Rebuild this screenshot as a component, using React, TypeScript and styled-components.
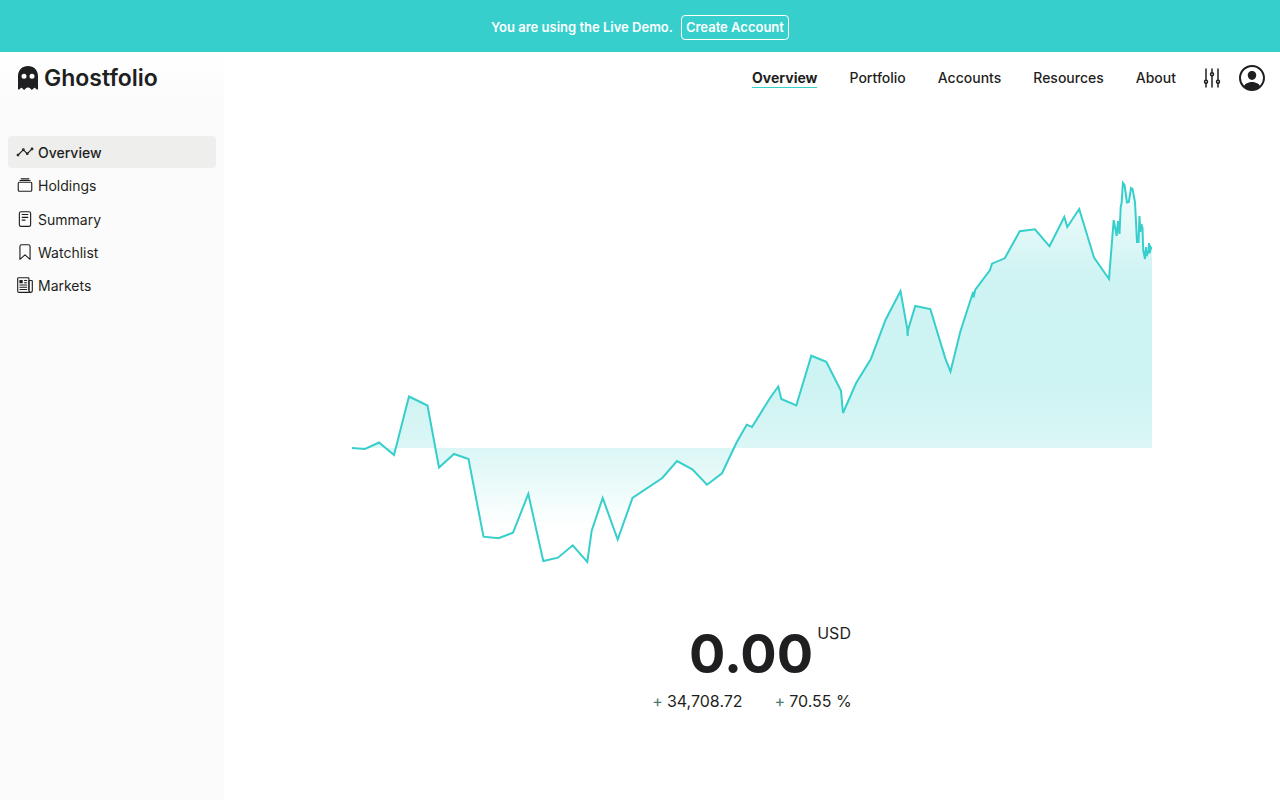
import React from 'react';
import styled, { createGlobalStyle } from 'styled-components';
import {
  IoAlbumsOutline,
  IoAnalyticsOutline,
  IoBookmarkOutline,
  IoNewspaperOutline,
  IoOptionsOutline,
  IoPersonCircleOutline,
  IoReaderOutline,
} from 'react-icons/io5';

const teal = '#36cfcc';
const ink = '#1f1f21';

const GlobalStyle = createGlobalStyle`
  *, *::before, *::after { box-sizing: border-box; }
  body {
    margin: 0;
    background: #fff;
    color: ${ink};
    font: 400 14px/20px Inter, Roboto, sans-serif;
  }
`;

const Page = styled.div`
  min-height: 100vh;
  display: flex;
  flex-direction: column;
`;

const Banner = styled.div`
  height: 52px;
  flex: none;
  display: flex;
  align-items: center;
  justify-content: center;
  gap: 8px;
  padding-top: 2px;
  background: ${teal};
  color: #fff;
  font-size: 13px;
  font-weight: 600;
`;

const BannerButton = styled.button`
  height: 25px;
  padding: 0 4px;
  border: 1px solid #fff;
  border-radius: 4px;
  background: transparent;
  color: inherit;
  font: inherit;
  cursor: pointer;
`;

const Body = styled.div`
  flex: 1;
  display: grid;
  grid-template-columns: 224px minmax(0, 1fr);
  grid-template-rows: 52px 1fr;
  background: linear-gradient(#fbfbfb, #fbfbfb) left / 224px 100% no-repeat;
`;

const Header = styled.header`
  grid-column: 1 / -1;
  display: flex;
  align-items: center;
  justify-content: space-between;
  padding: 0 12px 0 18px;
  background: linear-gradient(#fff, rgba(255, 255, 255, 0));
`;

const Logo = styled.a`
  display: flex;
  align-items: center;
  gap: 6px;
  color: ${ink};
  font-size: 23px;
  font-weight: 600;
  line-height: 32px;
  text-decoration: none;
`;

const HeaderEnd = styled.div`
  display: flex;
  align-items: center;
  gap: 12px;
`;

const Nav = styled.nav`
  display: flex;
  gap: 32px;
  margin-right: 12px;
`;

const NavLink = styled.a<{ $active?: boolean }>`
  height: 20px;
  color: ${ink};
  font-weight: ${(p) => (p.$active ? 700 : 500)};
  text-decoration: none;
  box-shadow: ${(p) => (p.$active ? `inset 0 -1px 0 ${teal}` : 'none')};
`;

const IconButton = styled.button<{ $rotate?: boolean }>`
  display: flex;
  padding: 0;
  border: 0;
  background: none;
  color: ${ink};
  cursor: pointer;
  svg { transform: ${(p) => (p.$rotate ? 'rotate(90deg)' : 'none')}; }
`;

const Sidebar = styled.nav`
  padding: 32px 8px;
`;

const SideList = styled.ul`
  display: flex;
  flex-direction: column;
  justify-content: space-between;
  min-height: 165px;
  margin: 0;
  padding: 0;
  list-style: none;
`;

const SideLink = styled.a<{ $active?: boolean }>`
  display: flex;
  align-items: center;
  gap: 4px;
  height: 32px;
  padding: 2px 8px 0;
  border-radius: 4px;
  background: ${(p) => (p.$active ? '#eeeeed' : 'transparent')};
  color: ${ink};
  font-weight: ${(p) => (p.$active ? 500 : 400)};
  text-decoration: none;
  svg { flex: none; margin-bottom: 2px; }
`;

const Main = styled.main`
  display: flex;
  flex-direction: column;
  align-items: center;
  padding: 44px 16px 24px;
`;

const Chart = styled.svg`
  display: block;
  width: 100%;
  max-width: 800px;
  height: auto;
`;

const Summary = styled.section`
  display: flex;
  flex-direction: column;
  align-items: center;
  margin-top: 23px;
`;

const Total = styled.div`
  display: flex;
  align-items: flex-start;
  gap: 4px;
  padding-left: 36px;
`;

const TotalValue = styled.span`
  font-size: 54px;
  line-height: 66px;
  font-weight: 700;
`;

const Currency = styled.span`
  font-size: 16px;
  line-height: 24px;
`;

const Changes = styled.div`
  display: flex;
  gap: 32px;
  margin-top: 2px;
  font-size: 16px;
  line-height: 24px;
`;

const Change = styled.span`
  display: flex;
  gap: 4px;
`;

const Sign = styled.span`
  color: #4d7a70;
`;

const points: [number, number][] = [
  [0, 300], [13, 301], [27, 294.5], [42, 307], [57, 248.5], [75.5, 257.5],
  [87, 319.5], [102, 306], [116.5, 311], [131.5, 388.7], [146.5, 390.3],
  [161, 384.7], [176.3, 346], [191.3, 413], [206, 409.7], [220.7, 397.3],
  [235.3, 414], [239.7, 382.7], [250.7, 350], [265.7, 391.5], [280.5, 350],
  [310.3, 330], [325, 313], [340.3, 321.3], [355, 336.7], [370, 325.3],
  [384.7, 294.3], [394.7, 276.7], [400, 279], [418.7, 249], [426.3, 238.5],
  [429.3, 251], [444.3, 257.5], [459.3, 207.7], [474.3, 213.7], [489, 242.7],
  [491, 265], [504, 235.3], [519, 210.7], [533.5, 172], [548.5, 143],
  [555.3, 181], [555.6, 188], [556, 182], [563.3, 158], [578.3, 161], [593.3, 210.3],
  [598.5, 223.5], [608.5, 183], [621.2, 143.7], [621.5, 149.5], [623.3, 141.7],
  [638, 122], [640, 115.7], [652.7, 110.3], [667.7, 83.3], [683, 81.3],
  [697.5, 98.3], [712.3, 69], [715.3, 79], [727.2, 61], [742, 109.5],
  [757, 131], [761.7, 72], [764.7, 88], [766, 73], [767.5, 86], [768.7, 59],
  [769.7, 54], [770.9, 35], [772.5, 37], [775, 54.5], [776.8, 54],
  [779, 40], [780.5, 41], [783, 54], [785, 94], [786.5, 94], [787.5, 68],
  [788.3, 84], [789.3, 76], [790.5, 80], [791.2, 102], [793, 111], [794, 99],
  [794.6, 108], [796.3, 104], [797, 95], [797.8, 105], [798.6, 99], [800, 101.3],
];

const line = points.map(([x, y], i) => `${i ? 'L' : 'M'}${x} ${y}`).join(' ');

function PerformanceChart() {
  return (
    <Chart viewBox="0 0 800 450" role="img" aria-label="Portfolio performance">
      <defs>
        <linearGradient id="area" gradientUnits="userSpaceOnUse" x1="0" y1="30" x2="0" y2="380">
          <stop offset="0" stopColor={teal} stopOpacity="0.04" />
          <stop offset="0.28" stopColor={teal} stopOpacity="0.24" />
          <stop offset="0.58" stopColor={teal} stopOpacity="0.25" />
          <stop offset="0.77" stopColor={teal} stopOpacity="0.18" />
          <stop offset="1" stopColor={teal} stopOpacity="0" />
        </linearGradient>
      </defs>
      <path d={`${line} V300 H0 Z`} fill="url(#area)" />
      <path d={line} fill="none" stroke={teal} strokeWidth="2" />
    </Chart>
  );
}

function Ghost() {
  return (
    <svg width="20" height="25" viewBox="0 0 20 25" aria-hidden="true">
      <path
        fill={ink}
        fillRule="evenodd"
        d="M0 10C0 4 4.300 0 10 0S20 4 20 10V23.200Q18.900 24.200 17.700 22.600Q16.600 21 15.500 22.600Q14.300 24.400 13.200 23.400Q11.700 21.300 10 21.600Q8.300 21.300 6.800 23.400Q5.700 24.400 4.500 22.600Q3.400 21 2.300 22.600Q1.100 24.200 0 23.200ZM6 7.700a2.500 2.500 0 1 0 0 5a2.500 2.500 0 0 0 0-5ZM14 7.700a2.500 2.500 0 1 0 0 5a2.500 2.500 0 0 0 0-5Z"
      />
    </svg>
  );
}

const navItems = ['Overview', 'Portfolio', 'Accounts', 'Resources', 'About'];

const sideItems = [
  { label: 'Overview', Icon: IoAnalyticsOutline },
  { label: 'Holdings', Icon: IoAlbumsOutline },
  { label: 'Summary', Icon: IoReaderOutline },
  { label: 'Watchlist', Icon: IoBookmarkOutline },
  { label: 'Markets', Icon: IoNewspaperOutline },
];

export default function App() {
  return (
    <Page>
      <GlobalStyle />
      <Banner>
        <span>You are using the Live Demo.</span>
        <BannerButton type="button">Create Account</BannerButton>
      </Banner>
      <Body>
        <Header>
          <Logo href="#home">
            <Ghost />
            Ghostfolio
          </Logo>
          <HeaderEnd>
            <Nav aria-label="Main">
              {navItems.map((label, i) => (
                <NavLink key={label} href={`#${label.toLowerCase()}`} $active={i === 0}>
                  {label}
                </NavLink>
              ))}
            </Nav>
            <IconButton type="button" aria-label="Assistant" $rotate>
              <IoOptionsOutline size={24} />
            </IconButton>
            <IconButton type="button" aria-label="Account">
              <IoPersonCircleOutline size={32} />
            </IconButton>
          </HeaderEnd>
        </Header>
        <Sidebar aria-label="Overview pages">
          <SideList>
            {sideItems.map(({ label, Icon }, i) => (
              <li key={label}>
                <SideLink href={`#${label.toLowerCase()}`} $active={i === 0}>
                  <Icon size={18} />
                  {label}
                </SideLink>
              </li>
            ))}
          </SideList>
        </Sidebar>
        <Main>
          <PerformanceChart />
          <Summary>
            <Total>
              <TotalValue>0.00</TotalValue>
              <Currency>USD</Currency>
            </Total>
            <Changes>
              <Change>
                <Sign>+</Sign>
                34,708.72
              </Change>
              <Change>
                <Sign>+</Sign>
                70.55 %
              </Change>
            </Changes>
          </Summary>
        </Main>
      </Body>
    </Page>
  );
}
